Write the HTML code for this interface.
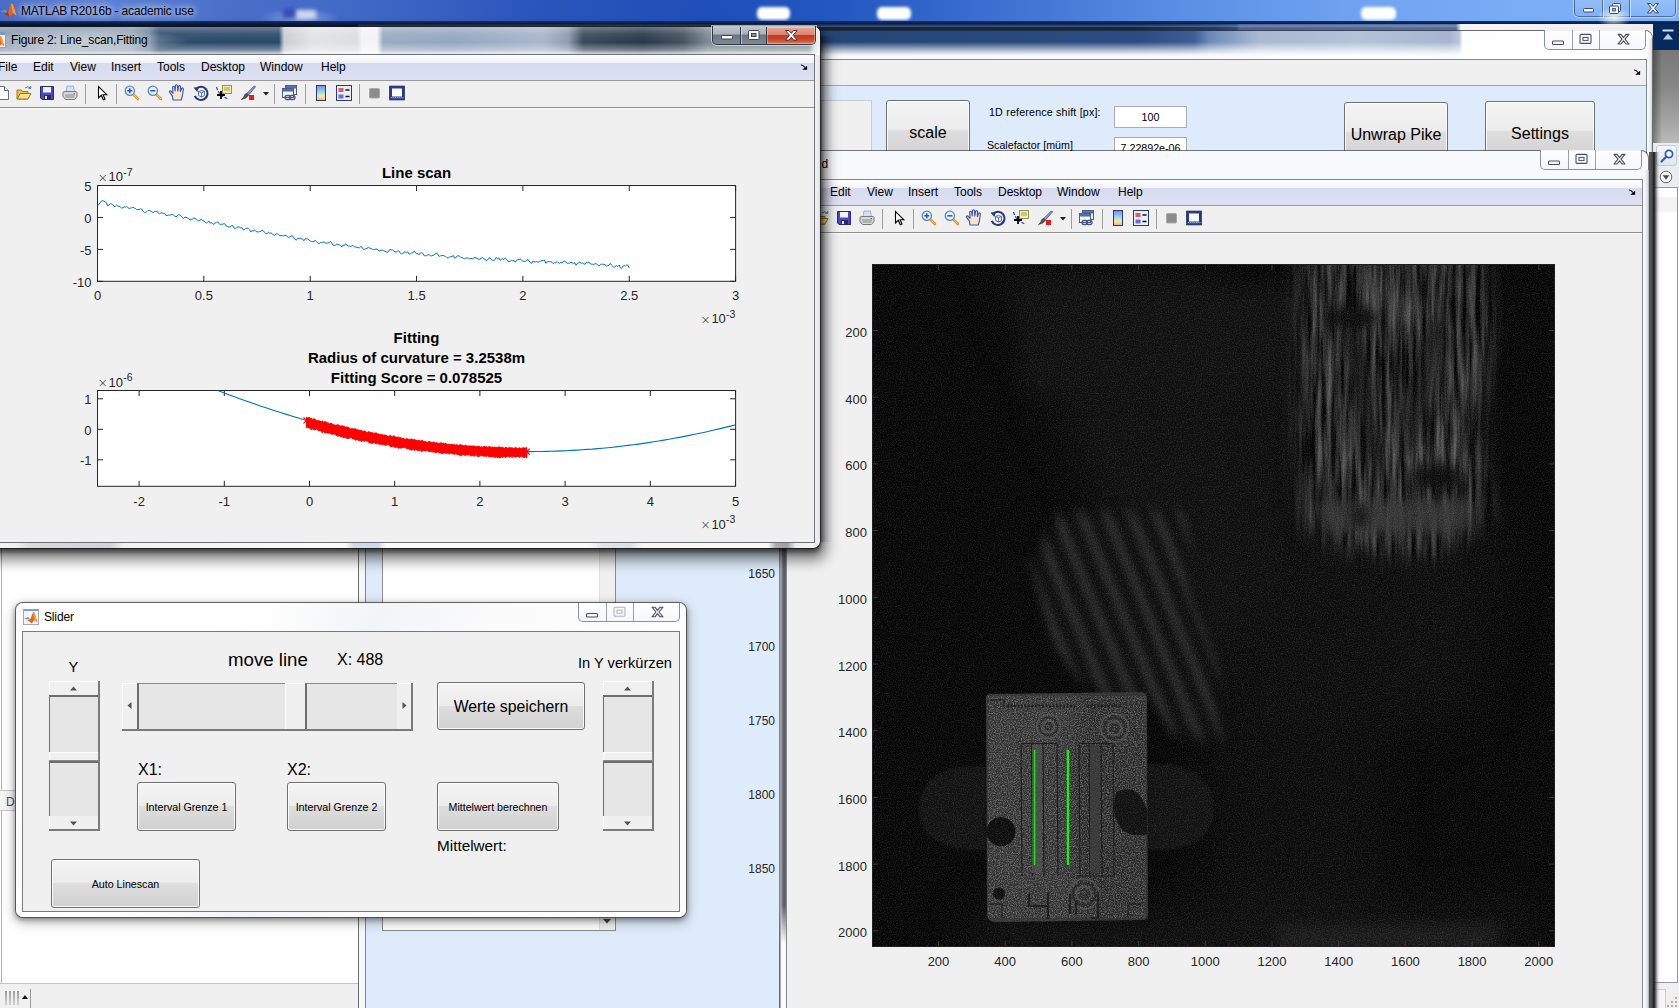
<!DOCTYPE html>
<html><head><meta charset="utf-8"><title>MATLAB R2016b - academic use</title>
<style>
html,body{margin:0;padding:0}
body{width:1679px;height:1008px;overflow:hidden;position:relative;background:#fff;font-family:"Liberation Sans",sans-serif;color:#000}
.a{position:absolute}
.ui{font-family:"Liberation Sans",sans-serif;font-size:12px;white-space:nowrap;color:#000}
.t{position:absolute;white-space:nowrap;line-height:1}
.btn{position:absolute;box-sizing:border-box;border:1px solid #707070;border-radius:3px;background:linear-gradient(#f4f4f4 0%,#ececec 49%,#dedede 50%,#d0d0d0 100%);box-shadow:inset 0 0 0 1px rgba(255,255,255,.85);text-align:center;white-space:nowrap}
.menu{position:absolute;background:linear-gradient(#ffffff 0%,#f1f3fa 32%,#d6dbef 34%,#dde1f2 100%)}
.menu span{position:absolute;top:5px;font-size:12px;white-space:nowrap;line-height:14px}
.tb{position:absolute;background:#f0f0f0}
.sep{position:absolute;width:1px;background:#a0a0a0;top:4px;height:20px}
.tick{position:absolute;font-size:12px;color:#262626;white-space:nowrap;line-height:12px}
.sl{position:absolute;background:#e6e6e6;box-sizing:border-box}
svg{position:absolute;overflow:visible}
</style></head><body>
<div id="mtitle" class="a" style="left:0;top:0;width:1679px;height:22px;background:
radial-gradient(ellipse 40px 10px at 300px 18px,rgba(200,215,245,.5),rgba(255,255,255,0) 100%),
linear-gradient(90deg,#4a6cc6 0%,#5c80d4 6%,#4a6fc9 14%,#3f68c6 22%,#2a55bb 32%,#1f4fb8 42%,#2457c0 50%,#3f72d2 60%,#5a8ee4 70%,#6ea2f0 80%,#78acf5 90%,#7eb2f8 100%)"></div>
<div class="a" style="left:757px;top:7px;width:33px;height:13px;border-radius:5px;background:#fff;filter:blur(1.600px)"></div><div class="a" style="left:877px;top:7px;width:34px;height:13px;border-radius:5px;background:#fff;filter:blur(1.600px)"></div><div class="a" style="left:1361px;top:7px;width:35px;height:13px;border-radius:5px;background:#fff;filter:blur(1.600px)"></div><div class="a" style="left:283px;top:9px;width:14px;height:9px;background:#2432a8;filter:blur(2px);opacity:.7"></div><div class="a" style="left:296px;top:10px;width:20px;height:9px;background:#e8ecf8;filter:blur(2px);opacity:.8"></div><div class="a" style="left:0;top:21px;width:1679px;height:6px;background:linear-gradient(#16326a,#0a1c40 50%,#08183a)"></div>
<svg style="left:0;top:2px" width="18" height="18" viewBox="0 0 18 18"><path d="M0 10 L5 7.5 L8 10.5 Z" fill="#4a9fd0"/><path d="M4 12 L8 10 L11 2 Q12.5 0.5 13.5 4 L16.5 13.5 L13 11 L9.5 15.5 L7 13 Z" fill="#e8622a"/><path d="M11 2 Q12.5 0.5 13.5 4 L16.5 13.5 L13 11 Z" fill="#f4a020"/><path d="M4 12 L8 10 L9.5 15.5 L7 13 Z" fill="#a03018"/></svg>
<div class="t ui" style="left:21px;top:5px;font-size:12px;letter-spacing:-0.16px;text-shadow:0 0 6px rgba(255,255,255,.9),0 0 10px rgba(255,255,255,.7)">MATLAB R2016b - academic use</div>
<div class="a" style="left:1574px;top:-1px;width:102px;height:18px;border:1px solid rgba(40,60,110,.65);border-radius:0 0 5px 5px;box-sizing:border-box;background:linear-gradient(rgba(255,255,255,.18),rgba(255,255,255,.05));box-shadow:0 0 0 1px rgba(255,255,255,.45),0 0 10px 2px rgba(255,255,240,.0)"></div>
<div class="a" style="left:1602px;top:0;width:1px;height:17px;background:rgba(40,60,110,.6)"></div><div class="a" style="left:1603px;top:0;width:1px;height:17px;background:rgba(255,255,255,.5)"></div>
<div class="a" style="left:1629px;top:0;width:1px;height:17px;background:rgba(40,60,110,.6)"></div><div class="a" style="left:1630px;top:0;width:1px;height:17px;background:rgba(255,255,255,.5)"></div>
<div class="a" style="left:1597px;top:2px;width:34px;height:22px;background:radial-gradient(ellipse 17px 11px at 50% 70%,rgba(255,255,235,.85),rgba(255,255,255,0) 100%)"></div>
<svg style="left:1574px;top:0" width="102" height="18" viewBox="0 0 102 18">
<rect x="9.5" y="8.5" width="10" height="3.5" rx="1" fill="#f4f4f4" stroke="#3c4a6c" stroke-width="1"/>
<rect x="38.5" y="3.5" width="8" height="8" rx="1" fill="#f0f0f0" stroke="#3c4a6c"/><rect x="35.500" y="6" width="9" height="7.500" rx="1" fill="#f4f4f4" stroke="#3c4a6c"/><rect x="38.500" y="8.500" width="3" height="2.5" fill="#8ab4f0" stroke="#3c4a6c" stroke-width=".8"/>
<path d="M73.500 3.500 l3.200 0 l2.300 3 l2.300 -3 l3.200 0 l-3.800 4.700 l3.800 4.700 l-3.200 0 l-2.300 -3 l-2.300 3 l-3.200 0 l3.800 -4.700 z" fill="#f2f2f2" stroke="#3c4a6c" stroke-width="1" stroke-linejoin="round"/>
</svg>
<div class="a" style="left:0;top:540px;width:358px;height:443px;background:#fff;border-left:1px solid #fff"></div>
<div class="a" style="left:1px;top:540px;width:1px;height:443px;background:#b4b4b4"></div>
<div class="a" style="left:0;top:790px;width:20px;height:21px;background:#f4f4f4;border-top:1px solid #c8c8c8;border-bottom:1px solid #c8c8c8;box-sizing:border-box"></div>
<div class="t ui" style="left:6px;top:796px;font-size:12px;color:#36507e">D</div>
<div class="a" style="left:0;top:983px;width:366px;height:25px;background:#f0f0f0;border-top:1px solid #c4c4c4;box-sizing:border-box"></div>
<div class="a" style="left:5px;top:991px;width:15px;height:14px;background:repeating-linear-gradient(90deg,#9a9a9a 0 2.5px,#f0f0f0 2.5px 4px);-webkit-mask-image:linear-gradient(#000,rgba(0,0,0,.35));mask-image:linear-gradient(#000,rgba(0,0,0,.35))"></div>
<svg style="left:22px;top:995px" width="6" height="4"><path d="M0 4 L3 0 L6 4Z" fill="#111"/></svg>
<div class="a" style="left:30px;top:989px;width:1px;height:19px;background:#9a9a9a"></div>
<div class="a" style="left:1653px;top:24px;width:26px;height:27px;background:#062a5e"></div>
<svg style="left:1662px;top:29px" width="12" height="12"><rect x="0.500" y="0.500" width="11" height="2" fill="#cfdbea"/><path d="M1 10.500 L6 4.500 L11 10.500 Z" fill="#b9cbdc"/></svg>
<div class="a" style="left:1653px;top:50px;width:26px;height:94px;background:linear-gradient(90deg,rgba(0,0,0,.35),rgba(0,0,0,0) 9px),linear-gradient(#787878,#888888 40%,#a4a4a4 75%,#bcbcbc 100%)"></div>
<div class="a" style="left:1653px;top:143px;width:26px;height:46px;background:#e9edf2"></div>
<div class="a" style="left:1656px;top:145px;width:21px;height:21px;border:1px solid #c2cad6;border-radius:3px;box-sizing:border-box;background:linear-gradient(#f4f7fb,#dfe6f0)"></div>
<svg style="left:1659px;top:148px" width="16" height="16" viewBox="0 0 16 16"><circle cx="10" cy="6" r="3.600" fill="#fff" stroke="#2a5fb0" stroke-width="1.800"/><path d="M7.200 8.800 L2.500 13.500" stroke="#2a5fb0" stroke-width="2.200" stroke-linecap="round"/></svg>
<svg style="left:1659px;top:170px" width="14" height="14" viewBox="0 0 14 14"><circle cx="7" cy="7" r="5.800" fill="#f6f6f6" stroke="#6a6a6a" stroke-width="1"/><path d="M3.800 5.200 L10.200 5.200 L7 9.800Z" fill="#444"/></svg>
<div class="a" style="left:1653px;top:187px;width:25px;height:796px;background:#fff;border:1px solid #8e97a6;border-left:none;box-sizing:border-box"></div>
<div class="a" style="left:1653px;top:197px;width:24px;height:15px;background:#f3f3f3"></div>
<div class="a" style="left:1653px;top:983px;width:26px;height:25px;background:#f0f0f0"></div>
<div class="a" style="left:1653px;top:989px;width:12px;height:19px;background:#f6f6f6;border-top:1px solid #cfcfcf;border-right:1px solid #cfcfcf"></div>
<svg style="left:1666px;top:996px" width="13" height="12"><g fill="#b4ac98"><rect x="9" y="1" width="2" height="2"/><rect x="5" y="5" width="2" height="2"/><rect x="9" y="5" width="2" height="2"/><rect x="1" y="9" width="2" height="2"/><rect x="5" y="9" width="2" height="2"/><rect x="9" y="9" width="2" height="2"/></g></svg>
<div class="a" style="left:358px;top:24px;width:1295px;height:8px;background:linear-gradient(90deg,#0c2146 0px,#0e2750 780px,#1f3d6e 860px,#2c4c80 878px,#4a6496 882px,#54709f 1098px,#f4f4f4 1103px,#ececec 1295px)"></div>
<div class="a" style="left:358px;top:24px;width:1295px;height:3px;background:linear-gradient(rgba(255,255,255,.0),rgba(255,255,255,.25))"></div>
<div id="gui" class="a" style="left:359px;top:31px;width:1293px;height:990px;border-radius:7px 7px 0 0;background:#f7f8fa;box-shadow:0 0 0 1px rgba(50,50,50,.7)"></div>
<div class="a" style="left:359px;top:31px;width:1293px;height:29px;border-radius:7px 7px 0 0;background:linear-gradient(90deg,#20406f 0px,#234677 460px,#2a4c80 780px,#3d5f95 835px,#6a88b8 850px,#8ea4c6 878px,#a9b9d2 900px,#b4c2d8 1000px,#a6b6d0 1090px,#b8c6da 1100px,#fdfdfe 1104px,#ffffff 1293px)"></div>
<div class="a" style="left:359px;top:42px;width:1293px;height:18px;background:linear-gradient(rgba(255,255,255,0),rgba(255,255,255,.55) 40%,rgba(255,255,255,.95) 72%,#fff)"></div>
<div class="a" style="left:1647px;top:38px;width:5px;height:980px;background:linear-gradient(90deg,#fdfdfe,#e6ebf2 70%,#c8ced6)"></div>
<div class="a" style="left:365px;top:59px;width:1282px;height:960px;background:#deebfa;border:1px solid #7d8791;box-sizing:border-box"></div>
<div class="a" style="left:366px;top:60px;width:1280px;height:25px;background:#f0f0f0"></div>
<div class="a" style="left:366px;top:85px;width:1280px;height:1px;background:#a5a5a5"></div>
<svg style="left:1633px;top:69px" width="8" height="6.500" viewBox="0 0 9 9" preserveAspectRatio="none"><path d="M1 1.500 Q3.500 1.200 5.500 4.800" fill="none" stroke="#000" stroke-width="1.300"/><path d="M8 2.500 L8 8 L2.500 8 Z" fill="#000"/></svg>
<div class="a" style="left:1544px;top:30px;width:102px;height:20px;border:1px solid #8a90a0;border-top:none;border-radius:0 0 5px 5px;box-sizing:border-box;background:linear-gradient(rgba(255,255,255,.9),rgba(244,246,250,.9))"></div><div class="a" style="left:1572px;top:30px;width:1px;height:19px;background:#9aa0ae"></div><div class="a" style="left:1599px;top:30px;width:1px;height:19px;background:#9aa0ae"></div><svg style="left:1544px;top:30px" width="102" height="20"><rect x="8.5" y="11.0" width="11" height="3.500" rx="1" fill="#f6f6f6" stroke="#4a5068" stroke-width="1.100"/><rect x="36.0" y="4.4" width="11" height="9" rx="1" fill="#f6f6f6" stroke="#4a5068" stroke-width="1.100"/><rect x="39.0" y="7.4" width="5" height="3" fill="#fff" stroke="#4a5068" stroke-width="1"/><path d="M74.0 4.4 l3 0 l2.500 3.200 l2.500 -3.200 l3 0 l-4 4.800 l4 4.800 l-3 0 l-2.500 -3.200 l-2.500 3.200 l-3 0 l4 -4.800 z" fill="#f4f4f4" stroke="#4a5068" stroke-width="1.100" stroke-linejoin="round"/></svg><div class="a" style="left:821px;top:100px;width:51px;height:60px;background:#f0f0f0;border:1px solid #c9cdd3;box-sizing:border-box"></div>
<div class="btn" style="left:886px;top:100px;width:84px;height:60px;font-size:16px;line-height:64px">scale</div>
<div class="t" style="left:989px;top:106px;font-size:10.670px;letter-spacing:.19px;line-height:12px">1D reference shift [px]:</div>
<div class="t" style="left:987px;top:139px;font-size:10.670px;line-height:12px">Scalefactor [müm]</div>
<div class="a" style="left:1114px;top:106px;width:73px;height:22px;background:#fff;border:1px solid #abadb3;box-sizing:border-box;text-align:center;font-size:10.670px;line-height:21px">100</div>
<div class="a" style="left:1114px;top:137px;width:73px;height:22px;background:#fff;border:1px solid #abadb3;box-sizing:border-box;text-align:center;font-size:10.670px;line-height:21px">7.22892e-06</div>
<div class="btn" style="left:1344px;top:102px;width:104px;height:60px;font-size:16px;line-height:64px">Unwrap Pike</div>
<div class="btn" style="left:1485px;top:101px;width:110px;height:60px;font-size:16px;line-height:63px">Settings</div>
<div class="a" style="left:382px;top:540px;width:234px;height:391px;background:#fff;border:1px solid #8c8c8c;box-sizing:border-box"></div>
<div class="a" style="left:599px;top:541px;width:16px;height:389px;background:#f0f0f0;border-left:1px solid #e2e2e2;box-sizing:border-box"></div>
<svg style="left:603px;top:919px" width="9" height="5"><path d="M0 0 L8 0 L4 4.500Z" fill="#444"/></svg>
<div class="tick" style="left:747px;top:567.5px;width:28px;text-align:right;font-size:12px">1650</div><div class="tick" style="left:747px;top:641.3px;width:28px;text-align:right;font-size:12px">1700</div><div class="tick" style="left:747px;top:715.0px;width:28px;text-align:right;font-size:12px">1750</div><div class="tick" style="left:747px;top:788.8px;width:28px;text-align:right;font-size:12px">1800</div><div class="tick" style="left:747px;top:862.5px;width:28px;text-align:right;font-size:12px">1850</div><div class="a" style="left:1649px;top:152px;width:11px;height:860px;background:linear-gradient(90deg,#5a5a5a 0,#4a4a4a 30%,#141414 45%,rgba(40,40,40,.55) 65%,rgba(120,120,120,.2) 82%,rgba(255,255,255,0) 100%)"></div>
<div id="imgfig" class="a" style="left:781px;top:151px;width:867px;height:870px;border-radius:7px 7px 0 0;background:#f7f9fc;box-shadow:0 0 0 1px rgba(40,40,40,.6)"></div>
<div class="a" style="left:779px;top:180px;width:9px;height:830px;background:linear-gradient(90deg,rgba(90,94,100,.5) 0,#6a6e74 1px,#c8cace 2px,#84888e 30%,#55595f 55%,#6a6e74 80%,#c0c2c6 92%,#70747a 100%)"></div>
<div class="a" style="left:779px;top:905px;width:9px;height:110px;background:linear-gradient(90deg,rgba(90,94,100,.5) 0,#5f6369 1px,#f4f6f9 2px,#ffffff 50%,#eef1f5 86%,#7a7e84 100%);-webkit-mask-image:linear-gradient(rgba(0,0,0,0) 0,#000 38px);mask-image:linear-gradient(rgba(0,0,0,0) 0,#000 38px)"></div>
<div class="a" style="left:1643px;top:170px;width:6px;height:840px;background:linear-gradient(90deg,#ffffff,#e9eef6 50%,#cfd8e6 85%,#8a8e96)"></div>
<div class="t ui" style="left:821.5px;top:158px;font-size:12px">d</div>
<div class="a" style="left:1540px;top:150px;width:102px;height:20px;border:1px solid #8a90a0;border-top:none;border-radius:0 0 5px 5px;box-sizing:border-box;background:linear-gradient(rgba(255,255,255,.9),rgba(244,246,250,.9))"></div><div class="a" style="left:1568px;top:150px;width:1px;height:19px;background:#9aa0ae"></div><div class="a" style="left:1595px;top:150px;width:1px;height:19px;background:#9aa0ae"></div><svg style="left:1540px;top:150px" width="102" height="20"><rect x="8.5" y="11.0" width="11" height="3.500" rx="1" fill="#f6f6f6" stroke="#4a5068" stroke-width="1.100"/><rect x="36.0" y="4.4" width="11" height="9" rx="1" fill="#f6f6f6" stroke="#4a5068" stroke-width="1.100"/><rect x="39.0" y="7.4" width="5" height="3" fill="#fff" stroke="#4a5068" stroke-width="1"/><path d="M74.0 4.4 l3 0 l2.500 3.200 l2.500 -3.200 l3 0 l-4 4.800 l4 4.800 l-3 0 l-2.500 -3.200 l-2.500 3.200 l-3 0 l4 -4.800 z" fill="#f4f4f4" stroke="#4a5068" stroke-width="1.100" stroke-linejoin="round"/></svg><div class="a" style="left:786px;top:179px;width:857px;height:840px;background:#f0f0f0;border:1px solid #84888e;box-sizing:border-box"></div><div class="menu" style="left:787px;top:180px;width:855px;height:25px"><span style="left:8px">File</span><span style="left:43px">Edit</span><span style="left:80px">View</span><span style="left:121px">Insert</span><span style="left:167px">Tools</span><span style="left:211px">Desktop</span><span style="left:270px">Window</span><span style="left:331px">Help</span></div><svg style="left:1628px;top:189px" width="8" height="6.500" viewBox="0 0 9 9" preserveAspectRatio="none"><path d="M1 1.500 Q3.500 1.200 5.500 4.800" fill="none" stroke="#000" stroke-width="1.300"/><path d="M8 2.500 L8 8 L2.500 8 Z" fill="#000"/></svg><div class="a" style="left:787px;top:205px;width:855px;height:1px;background:#9a9a9a"></div><div class="a" style="left:787px;top:232px;width:855px;height:1px;background:#8e8e8e"></div><div class="a" style="left:787px;top:233px;width:855px;height:1px;background:#fcfcfc"></div><svg style="left:792px;top:210px" width="16" height="16" viewBox="0 0 16 16"><path d="M2.500 1.500 L9.500 1.500 L13.500 5.500 L13.500 14.500 L2.500 14.500 Z" fill="#fdfdff" stroke="#62708c"/><path d="M9.500 1.500 L9.500 5.500 L13.500 5.500" fill="#dfe5f2" stroke="#62708c"/></svg><svg style="left:813px;top:210px" width="16" height="16" viewBox="0 0 16 16"><path d="M9 3 Q12 0.500 14.500 3 M14.800 1 L14.800 3.400 L12.400 3.400" fill="none" stroke="#5a78b0" stroke-width="1"/><path d="M1 5 L1 14 L12 14 L12 6.500 L6.500 6.500 L5.500 5 Z" fill="#e9c24a" stroke="#9a7a1c"/><path d="M1.500 14 L4 8.500 L15 8.500 L12 14 Z" fill="#f7e088" stroke="#9a7a1c"/></svg><svg style="left:836px;top:210px" width="16" height="16" viewBox="0 0 16 16"><path d="M1.500 1.500 L14.500 1.500 L14.500 14.500 L3 14.500 L1.500 13 Z" fill="#4a48c4" stroke="#2a2878"/><rect x="4" y="2" width="8" height="5.500" fill="#f2f2fa"/><rect x="5" y="10" width="7" height="4.500" fill="#2a2a60"/><rect x="6" y="11" width="2" height="3" fill="#e8e8f0"/></svg><svg style="left:859px;top:210px" width="16" height="16" viewBox="0 0 16 16"><path d="M5 1 L11.500 1 L12.500 7 L4 7 Z" fill="#cfe2fb" stroke="#8ea4c4" stroke-width=".8"/><path d="M1 7.500 Q1 6.500 3 6.500 L13 6.500 Q15 6.500 15 7.500 L15 11.500 L12.500 14.500 L3.500 14.500 L1 11.500 Z" fill="#d8d8d8" stroke="#7a7a7a"/><path d="M3 10 L13 10 M3.500 12 L12.500 12" stroke="#8a8a8a" stroke-width="1"/><rect x="11.500" y="8" width="1.500" height="1" fill="#3a9a3a"/></svg><div class="a" style="left:882px;top:209px;width:1px;height:20px;background:#9d9d9d"></div><svg style="left:891px;top:210px" width="16" height="16" viewBox="0 0 16 16"><path d="M4.500 1.500 L4.500 13 L7.300 10.300 L9.300 14.800 L11 14 L9 9.700 L12.800 9.700 Z" fill="#fff" stroke="#000" stroke-width="1.100" stroke-linejoin="miter"/></svg><div class="a" style="left:913px;top:209px;width:1px;height:20px;background:#9d9d9d"></div><svg style="left:921px;top:210px" width="16" height="16" viewBox="0 0 16 16"><path d="M8.800 8.800 L14 14" stroke="#d89430" stroke-width="2.600" stroke-linecap="round"/><path d="M8.800 8.800 L14 14" stroke="#f2c46a" stroke-width="1" stroke-linecap="round"/><circle cx="5.800" cy="5.800" r="4.600" fill="#e6f1ff" stroke="#5a84c8" stroke-width="1.300"/><path d="M3.300 5.800 L8.300 5.800 M5.800 3.300 L5.800 8.300" stroke="#2c56b0" stroke-width="1.500"/></svg><svg style="left:944px;top:210px" width="16" height="16" viewBox="0 0 16 16"><path d="M8.800 8.800 L14 14" stroke="#d89430" stroke-width="2.600" stroke-linecap="round"/><path d="M8.800 8.800 L14 14" stroke="#f2c46a" stroke-width="1" stroke-linecap="round"/><circle cx="5.800" cy="5.800" r="4.600" fill="#e6f1ff" stroke="#5a84c8" stroke-width="1.300"/><path d="M3.300 5.800 L8.300 5.800" stroke="#2c56b0" stroke-width="1.500"/></svg><svg style="left:966px;top:210px" width="16" height="16" viewBox="0 0 16 16"><g transform="translate(-1.300,-1.800) scale(1.180,1.120)"><path d="M4.500 15 L4 11.500 L1.500 8 Q1.200 6.500 2.800 7 L4.500 9 L4.200 3.500 Q4.800 2 5.800 3.300 L6.300 7 L6.600 2 Q7.500 0.700 8.300 2 L8.500 7 L9.300 2.700 Q10.300 1.500 10.900 3 L10.700 7.500 L11.900 4.500 Q13 3.700 13.300 5 L12.500 11 L11.500 15 Z" fill="#fbe3cf" stroke="#3c5cb0" stroke-width="1" stroke-linejoin="round"/></g></svg><svg style="left:990px;top:210px" width="16" height="16" viewBox="0 0 16 16"><path d="M3 4 A6.600 6.600 0 1 1 1.800 10.800" fill="none" stroke="#24387c" stroke-width="2.100"/><path d="M0.500 2.500 L5.800 2.200 L4.300 7 Z" fill="#24387c"/><path d="M5.500 6.500 L8.500 5.500 L11.500 6.500 L11.500 10.500 L8.500 12 L5.500 10.500 Z M5.500 6.500 L8.500 7.800 L11.500 6.500 M8.500 7.800 L8.500 12" fill="#eef2fb" stroke="#4a64a8" stroke-width=".9"/></svg><svg style="left:1013px;top:210px" width="16" height="16" viewBox="0 0 16 16"><path d="M0.500 2 Q3 11.500 13 14" fill="none" stroke="#2030e0" stroke-width="1.100" stroke-dasharray="3 1.500"/><rect x="6.500" y="0.500" width="9" height="8" fill="#f6eda0" stroke="#8a8a4a" stroke-width=".9"/><path d="M8 3 L14 3 M8 5 L14 5" stroke="#8a8a5a" stroke-width=".8"/><path d="M1 10 L9 10 M5 6 L5 14" stroke="#000" stroke-width="1.800"/></svg><svg style="left:1037px;top:210px" width="16" height="16" viewBox="0 0 16 16"><path d="M14.500 0.800 L15.500 1.800 L8.500 10 L6.800 8.500 Z" fill="#8aa0d8" stroke="#3a4a88" stroke-width=".8"/><path d="M6.800 8.500 L8.500 10 Q7 13.500 1.500 14.500 Q4.500 12 4.500 10 Q5.500 8.200 6.800 8.500Z" fill="#555" stroke="#333" stroke-width=".6"/><rect x="9" y="10" width="5" height="5" fill="#f01818"/></svg><svg style="left:1060px;top:217px" width="7" height="4"><path d="M0 0 L6 0 L3 3.500Z" fill="#222"/></svg><div class="a" style="left:1071px;top:209px;width:1px;height:20px;background:#9d9d9d"></div><svg style="left:1079px;top:210px" width="16" height="16" viewBox="0 0 16 16"><rect x="3.500" y="0.500" width="11" height="9" fill="#eaf0fa" stroke="#4a5c8c"/><rect x="3.500" y="0.500" width="11" height="2.500" fill="#5a74b4" stroke="#4a5c8c"/><rect x="0.500" y="3.500" width="11" height="9" fill="#f4f7fc" stroke="#4a5c8c"/><rect x="0.500" y="3.500" width="11" height="2.500" fill="#5a74b4" stroke="#4a5c8c"/><rect x="3" y="10.500" width="5.500" height="4" rx="2" fill="none" stroke="#4a5878" stroke-width="1.300"/><rect x="7.500" y="10.500" width="5.500" height="4" rx="2" fill="none" stroke="#4a5878" stroke-width="1.300"/></svg><div class="a" style="left:1102px;top:209px;width:1px;height:20px;background:#9d9d9d"></div><svg style="left:1110px;top:210px" width="16" height="16" viewBox="0 0 16 16"><defs><linearGradient id="cbg2787" x1="0" y1="0" x2="0" y2="1"><stop offset="0" stop-color="#8486ea"/><stop offset=".4" stop-color="#8cd4ea"/><stop offset=".7" stop-color="#f2eea4"/><stop offset="1" stop-color="#f2aa9c"/></linearGradient></defs><rect x="3.500" y="0.500" width="9" height="15" fill="url(#cbg2787)" stroke="#2a3a78"/></svg><svg style="left:1133px;top:210px" width="16" height="16" viewBox="0 0 16 16"><rect x="0.500" y="0.500" width="15" height="15" fill="#e9eef8" stroke="#2a3a78"/><rect x="2.500" y="3" width="5" height="4" fill="#e05c6c"/><rect x="2.500" y="9.500" width="5" height="4" fill="#6c6ce0"/><path d="M9.500 5 L13.500 5 M9.500 11.500 L13.500 11.500" stroke="#111" stroke-width="1.300"/></svg><div class="a" style="left:1156px;top:209px;width:1px;height:20px;background:#9d9d9d"></div><svg style="left:1164px;top:210px" width="16" height="16" viewBox="0 0 16 16"><rect x="2.500" y="3.500" width="10" height="9.500" rx="1" fill="#8c8c8c" stroke="#a8a8a8"/></svg><svg style="left:1186px;top:210px" width="16" height="16" viewBox="0 0 16 16"><rect x="0.700" y="1.200" width="14.600" height="13.600" fill="#2c3c8c" stroke="#1c2c6c" stroke-width="1"/><rect x="3" y="3.500" width="10" height="8" fill="#fff"/><path d="M1.500 13.200 l1 -1 l1 1 l1 -1 l1 1 l1 -1 l1 1 l1 -1 l1 1 l1 -1 l1 1 l1 -1 l1 1 l1 -1" stroke="#c8d0f0" stroke-width=".7" fill="none"/></svg><svg style="left:872px;top:264px" width="683" height="683" viewBox="0 0 683 683"><defs>
<filter id="nz" x="0" y="0" width="100%" height="100%" color-interpolation-filters="sRGB"><feTurbulence type="fractalNoise" baseFrequency="0.850" numOctaves="2" seed="5" result="t"/><feColorMatrix type="matrix" values="0 0 0 0 1  0 0 0 0 1  0 0 0 0 1  1.600 0 0 0 -0.620"/></filter>
<filter id="nz2" x="0" y="0" width="100%" height="100%" color-interpolation-filters="sRGB"><feTurbulence type="fractalNoise" baseFrequency="0.900" numOctaves="1" seed="11"/><feColorMatrix type="matrix" values="0 0 0 0 0  0 0 0 0 0  0 0 0 0 0  0 1.800 0 0 -0.700"/></filter>
<filter id="strk" x="0" y="0" width="100%" height="100%" color-interpolation-filters="sRGB"><feTurbulence type="fractalNoise" baseFrequency="0.200 0.014" numOctaves="3" seed="8"/><feColorMatrix type="matrix" values="0.600 0 0 0 -0.150  0.600 0 0 0 -0.150  0.600 0 0 0 -0.150  0 0 0 0 1"/></filter>
<filter id="b3" filterUnits="userSpaceOnUse" x="-150" y="-150" width="983" height="983" color-interpolation-filters="sRGB"><feGaussianBlur stdDeviation="3"/></filter>
<filter id="b6" filterUnits="userSpaceOnUse" x="-150" y="-150" width="983" height="983" color-interpolation-filters="sRGB"><feGaussianBlur stdDeviation="6"/></filter>
<filter id="b10" filterUnits="userSpaceOnUse" x="-150" y="-150" width="983" height="983" color-interpolation-filters="sRGB"><feGaussianBlur stdDeviation="10"/></filter>
<filter id="b1" filterUnits="userSpaceOnUse" x="-150" y="-150" width="983" height="983" color-interpolation-filters="sRGB"><feGaussianBlur stdDeviation="0.800"/></filter>
<filter id="b20" filterUnits="userSpaceOnUse" x="-150" y="-150" width="983" height="983" color-interpolation-filters="sRGB"><feGaussianBlur stdDeviation="22"/></filter>
<clipPath id="cp"><rect x="0" y="0" width="683" height="683"/></clipPath>
<mask id="blobm"><g filter="url(#b10)"><path d="M428 -20 L612 -20 L622 60 L612 150 L618 250 L596 272 L560 292 L470 288 L432 262 L424 170 L428 80 Z" fill="#fff"/></g></mask>
<mask id="strm"><g filter="url(#b6)"><path d="M186 248 L316 246 L318 330 L345 400 L350 480 L300 470 L276 440 L232 440 L176 382 L160 300 Z" fill="#fff"/></g></mask>
<pattern id="vs" width="23" height="10" patternUnits="userSpaceOnUse"><rect width="23" height="10" fill="#242424"/><rect x="2" width="2.500" height="10" fill="#404040"/><rect x="7" width="3" height="10" fill="#151515"/><rect x="12.500" width="2" height="10" fill="#3d3d3d"/><rect x="17" width="2.500" height="10" fill="#1a1a1a"/><rect x="20.500" width="1.500" height="10" fill="#404040"/></pattern>
<pattern id="ds" width="23.100" height="10" patternUnits="userSpaceOnUse" patternTransform="rotate(-22.500)"><rect width="23.100" height="10" fill="#0b0b0b"/><rect x="0" width="10.500" height="10" fill="#232323"/></pattern>
</defs><g clip-path="url(#cp)"><rect width="683" height="683" fill="#040404"/><g filter="url(#b20)" opacity=".9"><path d="M120 0 L330 0 L480 420 L300 430 Z" fill="#0f0f0f"/><path d="M330 100 L440 90 L430 600 L360 420 Z" fill="#0d0d0d"/><rect x="340" y="370" width="170" height="290" fill="#0b0b0b"/><rect x="100" y="640" width="560" height="80" fill="#0e0e0e"/><path d="M420 250 L640 250 L600 460 L380 460Z" fill="#0c0c0c"/></g><rect x="405" y="660" width="220" height="30" fill="#181818" filter="url(#b6)"/><rect x="150" y="20" width="300" height="110" fill="#0e0e0e" filter="url(#b10)"/><g mask="url(#strm)"><rect x="120" y="200" width="280" height="320" fill="url(#ds)" filter="url(#b3)"/></g><g mask="url(#blobm)"><rect x="400" y="-10" width="240" height="320" fill="#000" filter="url(#strk)"/><g filter="url(#b6)"><ellipse cx="481" cy="54" rx="26" ry="12" fill="#0c0c0c"/><ellipse cx="566" cy="213" rx="24" ry="13" fill="#0c0c0c"/><path d="M444 236 L600 236 L596 268 L450 270Z" fill="#3a3a3a" opacity=".8"/><path d="M470 70 L500 200 L510 200 L486 70Z" fill="#151515"/><path d="M560 60 L530 190 L540 190 L574 60Z" fill="#171717"/><ellipse cx="488" cy="252" rx="8" ry="14" fill="#101010"/></g><rect x="400" y="-10" width="240" height="320" fill="#fff" filter="url(#nz2)" opacity=".22"/></g><g filter="url(#b1)"><path d="M114 502 L92 502 Q47 508 47 544 Q47 580 92 586 L114 586 Z" fill="#101010"/><path d="M275 500 L298 500 Q342 508 342 544 Q342 580 298 586 L275 586 Z" fill="#101010"/></g><path d="M114 433 Q114 430 118 430 L270 428 Q275 429 275 434 L276 650 Q276 656 270 656 L122 658 Q115 657 115 650 Z" fill="#343434"/><rect x="205" y="432" width="70" height="222" fill="#000" opacity=".18" filter="url(#b6)"/><rect x="116" y="432" width="158" height="222" fill="#fff" filter="url(#nz2)" opacity=".30"/><rect x="116" y="432" width="158" height="222" fill="#000" filter="url(#nz)" opacity=".35"/><path d="M149.0 480 L150.0 612" stroke="#161616" stroke-width="1.100"/><path d="M159.5 480 L160.5 612" stroke="#161616" stroke-width="1.100"/><path d="M171.0 480 L172.0 612" stroke="#161616" stroke-width="1.100"/><path d="M185.0 480 L186.0 612" stroke="#161616" stroke-width="1.100"/><path d="M207.0 480 L208.0 612" stroke="#161616" stroke-width="1.100"/><path d="M217.0 480 L218.0 612" stroke="#161616" stroke-width="1.100"/><path d="M229.0 480 L230.0 612" stroke="#161616" stroke-width="1.100"/><path d="M241.0 480 L242.0 612" stroke="#161616" stroke-width="1.100"/><path d="M149 479.500 L185 479.500 M207 479.500 L241 479.500 M207 612 L241 612" stroke="#181818" stroke-width="1.200"/><rect x="160" y="481" width="10" height="128" fill="#484848"/><rect x="218" y="481" width="10" height="128" fill="#363636"/><circle cx="176.5" cy="462.5" r="3.0" fill="none" stroke="#262626" stroke-width="1.300"/><circle cx="176.5" cy="462.5" r="6.0" fill="none" stroke="#505050" stroke-width="1.300"/><circle cx="176.5" cy="462.5" r="9.0" fill="none" stroke="#262626" stroke-width="1.300"/><circle cx="176.5" cy="462.5" r="12.0" fill="none" stroke="#505050" stroke-width="1.300"/><circle cx="242.6" cy="464.0" r="3.5" fill="none" stroke="#262626" stroke-width="1.300"/><circle cx="242.6" cy="464.0" r="7.0" fill="none" stroke="#505050" stroke-width="1.300"/><circle cx="242.6" cy="464.0" r="10.5" fill="none" stroke="#262626" stroke-width="1.300"/><circle cx="242.6" cy="464.0" r="14.0" fill="none" stroke="#505050" stroke-width="1.300"/><circle cx="212.0" cy="630.0" r="3.8" fill="none" stroke="#262626" stroke-width="1.300"/><circle cx="212.0" cy="630.0" r="7.5" fill="none" stroke="#505050" stroke-width="1.300"/><circle cx="212.0" cy="630.0" r="11.2" fill="none" stroke="#262626" stroke-width="1.300"/><circle cx="212.0" cy="630.0" r="15.0" fill="none" stroke="#505050" stroke-width="1.300"/><circle cx="129" cy="567.700" r="14.500" fill="#0b0b0b"/><circle cx="127" cy="629.700" r="6" fill="#0e0e0e"/><path d="M244 528 Q262 520 270 535 L275 545 L275 570 Q262 574 250 566 Q238 550 244 528Z" fill="#0f0f0f"/><path d="M135 442 L205 442 M215 442 L250 442" stroke="#1c1c1c" stroke-width="3" stroke-dasharray="2 1.500"/><path d="M157 630 L157 642 L176 642 M176 628 L176 655 M198 630 L198 650 M204 636 L204 650 M226 628 L226 654 L219 654" stroke="#1a1a1a" stroke-width="2.200" fill="none"/><path d="M118 436 L132 436 L132 444 M118 640 L130 640 L130 654 M256 654 L256 640 L270 640" stroke="#202020" stroke-width="1.500" fill="none"/><rect x="161.800" y="486" width="1.500" height="115" fill="#00f000"/><rect x="194.800" y="486" width="2.200" height="115" fill="#00f800"/><rect width="683" height="683" fill="#fff" filter="url(#nz)" opacity=".17"/><path d="M0 66.5 L6 66.5 M683 66.5 L677 66.5 M66.5 683 L66.5 677 M66.5 0 L66.5 6" stroke="#3a3a3a" stroke-width="1"/><path d="M0 133.2 L6 133.2 M683 133.2 L677 133.2 M133.2 683 L133.2 677 M133.2 0 L133.2 6" stroke="#3a3a3a" stroke-width="1"/><path d="M0 199.9 L6 199.9 M683 199.9 L677 199.9 M199.9 683 L199.9 677 M199.9 0 L199.9 6" stroke="#3a3a3a" stroke-width="1"/><path d="M0 266.6 L6 266.6 M683 266.6 L677 266.6 M266.6 683 L266.6 677 M266.6 0 L266.6 6" stroke="#3a3a3a" stroke-width="1"/><path d="M0 333.3 L6 333.3 M683 333.3 L677 333.3 M333.3 683 L333.3 677 M333.3 0 L333.3 6" stroke="#3a3a3a" stroke-width="1"/><path d="M0 400.0 L6 400.0 M683 400.0 L677 400.0 M400.0 683 L400.0 677 M400.0 0 L400.0 6" stroke="#3a3a3a" stroke-width="1"/><path d="M0 466.7 L6 466.7 M683 466.7 L677 466.7 M466.7 683 L466.7 677 M466.7 0 L466.7 6" stroke="#3a3a3a" stroke-width="1"/><path d="M0 533.4 L6 533.4 M683 533.4 L677 533.4 M533.4 683 L533.4 677 M533.4 0 L533.4 6" stroke="#3a3a3a" stroke-width="1"/><path d="M0 600.1 L6 600.1 M683 600.1 L677 600.1 M600.1 683 L600.1 677 M600.1 0 L600.1 6" stroke="#3a3a3a" stroke-width="1"/><path d="M0 666.8 L6 666.8 M683 666.8 L677 666.8 M666.8 683 L666.8 677 M666.8 0 L666.8 6" stroke="#3a3a3a" stroke-width="1"/><rect x="0.500" y="0.500" width="682" height="682" fill="none" stroke="#202020" stroke-width="1"/></g></svg><div class="tick" style="left:826px;top:327.0px;width:41px;text-align:right;font-size:13px">200</div><div class="tick" style="left:908.5px;top:956px;width:60px;text-align:center;font-size:13px">200</div><div class="tick" style="left:826px;top:393.7px;width:41px;text-align:right;font-size:13px">400</div><div class="tick" style="left:975.2px;top:956px;width:60px;text-align:center;font-size:13px">400</div><div class="tick" style="left:826px;top:460.4px;width:41px;text-align:right;font-size:13px">600</div><div class="tick" style="left:1041.9px;top:956px;width:60px;text-align:center;font-size:13px">600</div><div class="tick" style="left:826px;top:527.1px;width:41px;text-align:right;font-size:13px">800</div><div class="tick" style="left:1108.6px;top:956px;width:60px;text-align:center;font-size:13px">800</div><div class="tick" style="left:826px;top:593.8px;width:41px;text-align:right;font-size:13px">1000</div><div class="tick" style="left:1175.3px;top:956px;width:60px;text-align:center;font-size:13px">1000</div><div class="tick" style="left:826px;top:660.5px;width:41px;text-align:right;font-size:13px">1200</div><div class="tick" style="left:1242.0px;top:956px;width:60px;text-align:center;font-size:13px">1200</div><div class="tick" style="left:826px;top:727.2px;width:41px;text-align:right;font-size:13px">1400</div><div class="tick" style="left:1308.7px;top:956px;width:60px;text-align:center;font-size:13px">1400</div><div class="tick" style="left:826px;top:793.9px;width:41px;text-align:right;font-size:13px">1600</div><div class="tick" style="left:1375.4px;top:956px;width:60px;text-align:center;font-size:13px">1600</div><div class="tick" style="left:826px;top:860.6px;width:41px;text-align:right;font-size:13px">1800</div><div class="tick" style="left:1442.1px;top:956px;width:60px;text-align:center;font-size:13px">1800</div><div class="tick" style="left:826px;top:927.3px;width:41px;text-align:right;font-size:13px">2000</div><div class="tick" style="left:1508.8px;top:956px;width:60px;text-align:center;font-size:13px">2000</div><div class="a" style="left:821px;top:36px;width:12px;height:506px;background:linear-gradient(90deg,rgba(0,0,0,.26),rgba(0,0,0,.12) 35%,rgba(0,0,0,.04) 70%,rgba(0,0,0,0))"></div><div id="fig2" class="a" style="left:-17px;top:27px;width:837px;height:521px;border-radius:7px;background:#ebecee;box-shadow:0 0 0 1px rgba(20,20,20,.7),0 3px 5px 1px rgba(0,0,0,.55),2px 8px 14px 4px rgba(0,0,0,.5)"></div>
<div class="a" style="left:-17px;top:27px;width:837px;height:28px;border-radius:6px 6px 0 0;background:linear-gradient(90deg,#8292a8 0px,#8797ac 150px,#6a7f98 166px,#2c4a6a 176px,#2a486a 296px,#c9cdd2 301px,#e2e3e5 330px,#dcdddf 374px,#f4f4f4 379px,#f4f4f4 394px,#9aabc2 400px,#93a6c0 470px,#a9b7cb 560px,#8d9cb0 585px,#3a4a5b 600px,#28384a 660px,#44525f 700px,#7d8994 725px,#8a949e 826px,#e2e6ea 832px,#eef0f2 837px)"></div>
<div class="a" style="left:-17px;top:27px;width:837px;height:28px;border-radius:6px 6px 0 0;background:linear-gradient(rgba(255,255,255,.30) 0,rgba(255,255,255,.08) 25%,rgba(255,255,255,0) 55%,rgba(255,255,255,.35) 82%,rgba(255,255,255,.9) 100%)"></div>
<div class="a" style="left:0px;top:29px;width:200px;height:24px;background:radial-gradient(ellipse 110px 13px at 80px 12px,rgba(255,255,255,.55),rgba(255,255,255,.3) 60%,rgba(255,255,255,0) 100%)"></div>
<div class="a" style="left:-11px;top:54px;width:826px;height:489px;background:#f0f0f0;border:1px solid #6e7278;box-sizing:border-box"></div>
<div class="a" style="left:815px;top:56px;width:5px;height:482px;background:linear-gradient(90deg,#f6f6f7,#e9eaec 60%,#dcdde0)"></div>
<div class="a" style="left:-10px;top:543px;width:824px;height:5px;background:linear-gradient(90deg,#f4f4f5 0px,#f0f0f2 25px,#d9dadc 40px,#d2d3d6 120px,#f2f2f3 135px,#fafafa 355px,#d3dbe6 364px,#d0d9e5 388px,#fafafa 396px,#fafafa 600px,#e2e4e7 612px,#dcdfe3 640px,#f6f6f7 652px,#f8f8f8 778px,#a8abb0 786px,#9da0a5 797px,#eeeff0 806px,#f4f4f5 824px)"></div>
<div class="a" style="left:-10px;top:32px;width:16px;height:16px;background:#f4f4f4;border:1px solid #9aa0a8;box-sizing:border-box;border-top:3px solid #7a9ac8"></div>
<svg style="left:-9px;top:35px" width="14.500" height="13" viewBox="0 0 18 16"><path d="M0 10 L5 7.500 L8 10.500 Z" fill="#4a9fd0"/><path d="M4 12 L8 10 L11 2 Q12.500 0.500 13.500 4 L16.500 13.500 L13 11 L9.500 15.500 L7 13 Z" fill="#e8622a"/><path d="M11 2 Q12.500 0.500 13.500 4 L16.500 13.500 L13 11 Z" fill="#f4a020"/></svg>
<div class="t ui" style="left:11px;top:34px;font-size:12px;letter-spacing:-0.18px">Figure 2: Line_scan,Fitting</div>
<div class="a" style="left:712px;top:26px;width:104px;height:19px;border:1px solid #2e3a48;border-top:none;border-radius:0 0 5px 5px;box-sizing:border-box;background:linear-gradient(#c3c9cf 0%,#a9b1b9 45%,#6a7682 50%,#7e8a96 100%);box-shadow:0 0 0 1px rgba(255,255,255,.55)"></div>
<div class="a" style="left:767px;top:27px;width:48px;height:17px;border-radius:0 0 4px 0;background:linear-gradient(#e9a493 0%,#dd8270 45%,#c13a22 50%,#c8492c 75%,#da7a55 100%);box-shadow:inset 0 0 0 1px rgba(255,255,255,.35)"></div>
<div class="a" style="left:740px;top:27px;width:1px;height:17px;background:#2e3a48"></div><div class="a" style="left:741px;top:27px;width:1px;height:17px;background:rgba(255,255,255,.45)"></div>
<div class="a" style="left:766px;top:27px;width:1px;height:17px;background:#2e3a48"></div>
<svg style="left:712px;top:26px" width="104" height="19">
<rect x="9.500" y="9.500" width="11" height="3.500" rx="1" fill="#fff" stroke="#3a4450" stroke-width="1"/>
<rect x="36.500" y="4.500" width="10.500" height="9" rx="1" fill="#fff" stroke="#3a4450" stroke-width="1"/><rect x="39.500" y="7.500" width="4.500" height="3" fill="#8a96a2" stroke="#3a4450" stroke-width="1"/>
<path d="M73.500 4.500 l3.600 0 l2.200 2.900 l2.200 -2.900 l3.600 0 l-4 4.800 l4 4.800 l-3.600 0 l-2.200 -2.900 l-2.200 2.900 l-3.600 0 l4 -4.800 z" fill="#fff" stroke="#4a3030" stroke-width="1" stroke-linejoin="round"/>
</svg>
<div class="menu" style="left:-10px;top:55px;width:824px;height:25px"><span style="left:8px">File</span><span style="left:43px">Edit</span><span style="left:80px">View</span><span style="left:121px">Insert</span><span style="left:167px">Tools</span><span style="left:211px">Desktop</span><span style="left:270px">Window</span><span style="left:331px">Help</span></div><svg style="left:800px;top:64px" width="8" height="6.500" viewBox="0 0 9 9" preserveAspectRatio="none"><path d="M1 1.500 Q3.500 1.200 5.500 4.800" fill="none" stroke="#000" stroke-width="1.300"/><path d="M8 2.500 L8 8 L2.500 8 Z" fill="#000"/></svg><div class="a" style="left:-10px;top:80px;width:824px;height:1px;background:#9a9a9a"></div><div class="a" style="left:-10px;top:107px;width:824px;height:1px;background:#8e8e8e"></div><div class="a" style="left:-10px;top:108px;width:824px;height:1px;background:#fcfcfc"></div><svg style="left:-5px;top:85px" width="16" height="16" viewBox="0 0 16 16"><path d="M2.500 1.500 L9.500 1.500 L13.500 5.500 L13.500 14.500 L2.500 14.500 Z" fill="#fdfdff" stroke="#62708c"/><path d="M9.500 1.500 L9.500 5.500 L13.500 5.500" fill="#dfe5f2" stroke="#62708c"/></svg><svg style="left:16px;top:85px" width="16" height="16" viewBox="0 0 16 16"><path d="M9 3 Q12 0.500 14.500 3 M14.800 1 L14.800 3.400 L12.400 3.400" fill="none" stroke="#5a78b0" stroke-width="1"/><path d="M1 5 L1 14 L12 14 L12 6.500 L6.500 6.500 L5.500 5 Z" fill="#e9c24a" stroke="#9a7a1c"/><path d="M1.500 14 L4 8.500 L15 8.500 L12 14 Z" fill="#f7e088" stroke="#9a7a1c"/></svg><svg style="left:39px;top:85px" width="16" height="16" viewBox="0 0 16 16"><path d="M1.500 1.500 L14.500 1.500 L14.500 14.500 L3 14.500 L1.500 13 Z" fill="#4a48c4" stroke="#2a2878"/><rect x="4" y="2" width="8" height="5.500" fill="#f2f2fa"/><rect x="5" y="10" width="7" height="4.500" fill="#2a2a60"/><rect x="6" y="11" width="2" height="3" fill="#e8e8f0"/></svg><svg style="left:62px;top:85px" width="16" height="16" viewBox="0 0 16 16"><path d="M5 1 L11.500 1 L12.500 7 L4 7 Z" fill="#cfe2fb" stroke="#8ea4c4" stroke-width=".8"/><path d="M1 7.500 Q1 6.500 3 6.500 L13 6.500 Q15 6.500 15 7.500 L15 11.500 L12.500 14.500 L3.500 14.500 L1 11.500 Z" fill="#d8d8d8" stroke="#7a7a7a"/><path d="M3 10 L13 10 M3.500 12 L12.500 12" stroke="#8a8a8a" stroke-width="1"/><rect x="11.500" y="8" width="1.500" height="1" fill="#3a9a3a"/></svg><div class="a" style="left:85px;top:84px;width:1px;height:20px;background:#9d9d9d"></div><svg style="left:94px;top:85px" width="16" height="16" viewBox="0 0 16 16"><path d="M4.500 1.500 L4.500 13 L7.300 10.300 L9.300 14.800 L11 14 L9 9.700 L12.800 9.700 Z" fill="#fff" stroke="#000" stroke-width="1.100" stroke-linejoin="miter"/></svg><div class="a" style="left:116px;top:84px;width:1px;height:20px;background:#9d9d9d"></div><svg style="left:124px;top:85px" width="16" height="16" viewBox="0 0 16 16"><path d="M8.800 8.800 L14 14" stroke="#d89430" stroke-width="2.600" stroke-linecap="round"/><path d="M8.800 8.800 L14 14" stroke="#f2c46a" stroke-width="1" stroke-linecap="round"/><circle cx="5.800" cy="5.800" r="4.600" fill="#e6f1ff" stroke="#5a84c8" stroke-width="1.300"/><path d="M3.300 5.800 L8.300 5.800 M5.800 3.300 L5.800 8.300" stroke="#2c56b0" stroke-width="1.500"/></svg><svg style="left:147px;top:85px" width="16" height="16" viewBox="0 0 16 16"><path d="M8.800 8.800 L14 14" stroke="#d89430" stroke-width="2.600" stroke-linecap="round"/><path d="M8.800 8.800 L14 14" stroke="#f2c46a" stroke-width="1" stroke-linecap="round"/><circle cx="5.800" cy="5.800" r="4.600" fill="#e6f1ff" stroke="#5a84c8" stroke-width="1.300"/><path d="M3.300 5.800 L8.300 5.800" stroke="#2c56b0" stroke-width="1.500"/></svg><svg style="left:169px;top:85px" width="16" height="16" viewBox="0 0 16 16"><g transform="translate(-1.300,-1.800) scale(1.180,1.120)"><path d="M4.500 15 L4 11.500 L1.500 8 Q1.200 6.500 2.800 7 L4.500 9 L4.200 3.500 Q4.800 2 5.800 3.300 L6.300 7 L6.600 2 Q7.500 0.700 8.300 2 L8.500 7 L9.300 2.700 Q10.300 1.500 10.900 3 L10.700 7.500 L11.900 4.500 Q13 3.700 13.300 5 L12.500 11 L11.500 15 Z" fill="#fbe3cf" stroke="#3c5cb0" stroke-width="1" stroke-linejoin="round"/></g></svg><svg style="left:193px;top:85px" width="16" height="16" viewBox="0 0 16 16"><path d="M3 4 A6.600 6.600 0 1 1 1.800 10.800" fill="none" stroke="#24387c" stroke-width="2.100"/><path d="M0.500 2.500 L5.800 2.200 L4.300 7 Z" fill="#24387c"/><path d="M5.500 6.500 L8.500 5.500 L11.500 6.500 L11.500 10.500 L8.500 12 L5.500 10.500 Z M5.500 6.500 L8.500 7.800 L11.500 6.500 M8.500 7.800 L8.500 12" fill="#eef2fb" stroke="#4a64a8" stroke-width=".9"/></svg><svg style="left:216px;top:85px" width="16" height="16" viewBox="0 0 16 16"><path d="M0.500 2 Q3 11.500 13 14" fill="none" stroke="#2030e0" stroke-width="1.100" stroke-dasharray="3 1.500"/><rect x="6.500" y="0.500" width="9" height="8" fill="#f6eda0" stroke="#8a8a4a" stroke-width=".9"/><path d="M8 3 L14 3 M8 5 L14 5" stroke="#8a8a5a" stroke-width=".8"/><path d="M1 10 L9 10 M5 6 L5 14" stroke="#000" stroke-width="1.800"/></svg><svg style="left:240px;top:85px" width="16" height="16" viewBox="0 0 16 16"><path d="M14.500 0.800 L15.500 1.800 L8.500 10 L6.800 8.500 Z" fill="#8aa0d8" stroke="#3a4a88" stroke-width=".8"/><path d="M6.800 8.500 L8.500 10 Q7 13.500 1.500 14.500 Q4.500 12 4.500 10 Q5.500 8.200 6.800 8.500Z" fill="#555" stroke="#333" stroke-width=".6"/><rect x="9" y="10" width="5" height="5" fill="#f01818"/></svg><svg style="left:263px;top:92px" width="7" height="4"><path d="M0 0 L6 0 L3 3.500Z" fill="#222"/></svg><div class="a" style="left:274px;top:84px;width:1px;height:20px;background:#9d9d9d"></div><svg style="left:282px;top:85px" width="16" height="16" viewBox="0 0 16 16"><rect x="3.500" y="0.500" width="11" height="9" fill="#eaf0fa" stroke="#4a5c8c"/><rect x="3.500" y="0.500" width="11" height="2.500" fill="#5a74b4" stroke="#4a5c8c"/><rect x="0.500" y="3.500" width="11" height="9" fill="#f4f7fc" stroke="#4a5c8c"/><rect x="0.500" y="3.500" width="11" height="2.500" fill="#5a74b4" stroke="#4a5c8c"/><rect x="3" y="10.500" width="5.500" height="4" rx="2" fill="none" stroke="#4a5878" stroke-width="1.300"/><rect x="7.500" y="10.500" width="5.500" height="4" rx="2" fill="none" stroke="#4a5878" stroke-width="1.300"/></svg><div class="a" style="left:305px;top:84px;width:1px;height:20px;background:#9d9d9d"></div><svg style="left:313px;top:85px" width="16" height="16" viewBox="0 0 16 16"><defs><linearGradient id="cbg1990" x1="0" y1="0" x2="0" y2="1"><stop offset="0" stop-color="#8486ea"/><stop offset=".4" stop-color="#8cd4ea"/><stop offset=".7" stop-color="#f2eea4"/><stop offset="1" stop-color="#f2aa9c"/></linearGradient></defs><rect x="3.500" y="0.500" width="9" height="15" fill="url(#cbg1990)" stroke="#2a3a78"/></svg><svg style="left:336px;top:85px" width="16" height="16" viewBox="0 0 16 16"><rect x="0.500" y="0.500" width="15" height="15" fill="#e9eef8" stroke="#2a3a78"/><rect x="2.500" y="3" width="5" height="4" fill="#e05c6c"/><rect x="2.500" y="9.500" width="5" height="4" fill="#6c6ce0"/><path d="M9.500 5 L13.500 5 M9.500 11.500 L13.500 11.500" stroke="#111" stroke-width="1.300"/></svg><div class="a" style="left:359px;top:84px;width:1px;height:20px;background:#9d9d9d"></div><svg style="left:367px;top:85px" width="16" height="16" viewBox="0 0 16 16"><rect x="2.500" y="3.500" width="10" height="9.500" rx="1" fill="#8c8c8c" stroke="#a8a8a8"/></svg><svg style="left:389px;top:85px" width="16" height="16" viewBox="0 0 16 16"><rect x="0.700" y="1.200" width="14.600" height="13.600" fill="#2c3c8c" stroke="#1c2c6c" stroke-width="1"/><rect x="3" y="3.500" width="10" height="8" fill="#fff"/><path d="M1.500 13.200 l1 -1 l1 1 l1 -1 l1 1 l1 -1 l1 1 l1 -1 l1 1 l1 -1 l1 1 l1 -1 l1 1 l1 -1" stroke="#c8d0f0" stroke-width=".7" fill="none"/></svg><svg style="left:0;top:109px" width="814" height="433" viewBox="0 109 814 433" font-family="Liberation Sans, sans-serif"><rect x="97.5" y="185.5" width="638.1" height="95.8" fill="#fff" stroke="#262626" stroke-width="1"/><path d="M97.50 281.3 l0 -5.500 M97.50 185.5 l0 5.500 M203.85 281.3 l0 -5.500 M203.85 185.5 l0 5.500 M310.20 281.3 l0 -5.500 M310.20 185.5 l0 5.500 M416.55 281.3 l0 -5.500 M416.55 185.5 l0 5.500 M522.90 281.3 l0 -5.500 M522.90 185.5 l0 5.500 M629.25 281.3 l0 -5.500 M629.25 185.5 l0 5.500 M735.60 281.3 l0 -5.500 M735.60 185.5 l0 5.500 M97.5 185.50 l5.500 0 M735.6 185.50 l-5.500 0 M97.5 217.43 l5.500 0 M735.6 217.43 l-5.500 0 M97.5 249.37 l5.500 0 M735.6 249.37 l-5.500 0 M97.5 281.30 l5.500 0 M735.6 281.30 l-5.500 0" stroke="#262626" stroke-width="1" fill="none"/><polyline points="97.5,206.0 98.8,204.4 100.0,202.8 101.3,201.2 102.6,200.5 103.8,201.2 105.1,201.9 106.4,202.6 107.6,205.8 108.9,205.3 110.2,203.6 111.4,203.9 112.7,204.5 114.0,206.4 115.2,206.4 116.5,205.1 117.8,205.9 119.0,206.3 120.3,207.0 121.6,208.1 122.8,207.7 124.1,206.9 125.4,207.1 126.6,206.6 127.9,207.6 129.2,208.5 130.4,208.1 131.7,207.9 132.9,207.2 134.2,208.0 135.5,208.5 136.7,209.7 138.0,209.7 139.3,209.5 140.5,208.9 141.8,209.1 143.1,211.3 144.3,212.4 145.6,212.3 146.9,211.5 148.1,210.3 149.4,210.4 150.7,211.3 151.9,211.8 153.2,212.7 154.5,211.4 155.7,211.5 157.0,211.2 158.3,213.1 159.5,214.0 160.8,213.0 162.1,212.9 163.3,213.6 164.6,213.5 165.9,215.4 167.1,215.5 168.4,215.1 169.7,215.2 170.9,214.8 172.2,214.3 173.5,214.9 174.7,216.0 176.0,216.9 177.3,215.9 178.5,214.5 179.8,215.1 181.1,216.1 182.3,217.1 183.6,218.5 184.9,217.1 186.1,217.4 187.4,217.8 188.7,218.5 189.9,220.2 191.2,219.3 192.5,219.3 193.7,217.9 195.0,218.6 196.3,219.2 197.5,220.1 198.8,221.1 200.1,220.2 201.3,219.1 202.6,220.5 203.9,220.8 205.1,222.1 206.4,223.0 207.6,222.2 208.9,221.1 210.2,223.0 211.4,222.8 212.7,223.7 214.0,224.4 215.2,222.9 216.5,222.3 217.8,222.2 219.0,223.2 220.3,224.8 221.6,224.2 222.8,224.2 224.1,223.6 225.4,224.4 226.6,226.5 227.9,226.8 229.2,227.0 230.4,227.0 231.7,225.5 233.0,226.0 234.2,228.2 235.5,228.8 236.8,227.6 238.0,226.7 239.3,227.1 240.6,227.8 241.8,227.6 243.1,229.7 244.4,229.6 245.6,228.6 246.9,228.1 248.2,228.3 249.4,229.5 250.7,232.0 252.0,230.8 253.2,231.0 254.5,229.9 255.8,231.3 257.0,231.9 258.3,232.0 259.6,231.5 260.8,231.6 262.1,230.0 263.4,230.8 264.6,232.4 265.9,233.8 267.2,233.4 268.4,232.3 269.7,233.3 271.0,232.8 272.2,233.7 273.5,235.1 274.8,235.3 276.0,233.9 277.3,233.7 278.5,234.5 279.8,235.8 281.1,235.6 282.3,235.7 283.6,235.8 284.9,235.5 286.1,235.6 287.4,236.8 288.7,237.5 289.9,236.7 291.2,236.0 292.5,235.8 293.7,238.2 295.0,239.0 296.3,240.2 297.5,238.4 298.8,238.7 300.1,238.0 301.3,238.8 302.6,239.0 303.9,240.8 305.1,238.8 306.4,238.9 307.7,238.9 308.9,239.9 310.2,240.8 311.5,241.6 312.7,241.7 314.0,241.4 315.3,240.3 316.5,241.6 317.8,243.1 319.1,243.7 320.3,242.6 321.6,242.4 322.9,242.1 324.1,242.0 325.4,243.0 326.7,243.1 327.9,243.1 329.2,242.5 330.5,241.3 331.7,243.1 333.0,245.0 334.3,245.6 335.5,245.2 336.8,244.0 338.1,244.5 339.3,244.9 340.6,245.7 341.9,246.9 343.1,245.1 344.4,245.4 345.6,243.7 346.9,245.2 348.2,245.9 349.4,246.0 350.7,246.6 352.0,245.5 353.2,245.6 354.5,247.0 355.8,247.0 357.0,247.3 358.3,247.7 359.6,247.7 360.8,246.6 362.1,247.2 363.4,249.6 364.6,249.5 365.9,248.6 367.2,248.5 368.4,247.0 369.7,248.2 371.0,248.3 372.2,249.3 373.5,249.7 374.8,249.3 376.0,249.2 377.3,249.1 378.6,250.7 379.8,250.8 381.1,250.2 382.4,250.2 383.6,250.6 384.9,251.2 386.2,251.8 387.4,252.6 388.7,250.7 390.0,249.5 391.2,249.8 392.5,250.0 393.8,250.9 395.0,251.9 396.3,252.0 397.6,251.1 398.8,250.8 400.1,252.7 401.4,254.1 402.6,253.6 403.9,252.5 405.2,251.6 406.4,253.0 407.7,251.8 409.0,254.0 410.2,254.0 411.5,252.9 412.8,252.9 414.0,251.1 415.3,252.1 416.6,253.8 417.8,253.4 419.1,254.8 420.3,253.0 421.6,252.8 422.9,253.4 424.1,255.7 425.4,255.8 426.7,255.6 427.9,254.8 429.2,254.8 430.5,255.7 431.7,255.9 433.0,255.1 434.3,255.0 435.5,253.6 436.8,253.1 438.1,254.8 439.3,256.4 440.6,255.8 441.9,255.7 443.1,255.2 444.4,256.0 445.7,256.4 446.9,257.6 448.2,258.2 449.5,256.8 450.7,256.7 452.0,256.6 453.3,255.4 454.5,258.0 455.8,257.8 457.1,255.9 458.3,255.8 459.6,256.1 460.9,257.6 462.1,257.6 463.4,258.4 464.7,258.7 465.9,257.9 467.2,258.2 468.5,257.9 469.7,259.2 471.0,258.4 472.3,258.8 473.5,258.1 474.8,257.4 476.1,258.2 477.3,257.9 478.6,259.6 479.9,259.1 481.1,258.4 482.4,257.5 483.7,259.0 484.9,259.0 486.2,260.8 487.4,260.2 488.7,258.4 490.0,257.7 491.2,259.2 492.5,260.3 493.8,260.8 495.0,259.4 496.3,257.4 497.6,258.9 498.8,257.9 500.1,260.4 501.4,259.2 502.6,259.0 503.9,259.4 505.2,258.0 506.4,259.0 507.7,260.9 509.0,261.7 510.2,261.4 511.5,260.3 512.8,260.8 514.0,260.4 515.3,262.2 516.6,260.2 517.8,259.7 519.1,259.5 520.4,258.8 521.6,260.5 522.9,261.2 524.2,261.2 525.4,261.4 526.7,260.1 528.0,259.7 529.2,260.8 530.5,262.9 531.8,263.3 533.0,261.0 534.3,261.7 535.6,261.9 536.8,261.5 538.1,262.3 539.4,261.4 540.6,261.3 541.9,260.4 543.2,260.5 544.4,260.0 545.7,263.2 547.0,262.3 548.2,261.5 549.5,261.9 550.8,261.5 552.0,262.3 553.3,263.8 554.6,262.4 555.8,262.8 557.1,261.6 558.3,262.8 559.6,263.4 560.9,262.5 562.1,262.9 563.4,261.2 564.7,261.2 565.9,262.2 567.2,263.3 568.5,263.3 569.7,263.1 571.0,262.3 572.3,262.8 573.5,263.7 574.8,262.7 576.1,265.2 577.3,263.3 578.6,262.9 579.9,262.1 581.1,263.2 582.4,263.0 583.7,263.7 584.9,264.3 586.2,262.3 587.5,263.1 588.7,261.8 590.0,263.8 591.3,264.1 592.5,264.2 593.8,264.5 595.1,263.7 596.3,263.8 597.6,264.8 598.9,265.8 600.1,264.8 601.4,264.1 602.7,264.3 603.9,264.3 605.2,264.7 606.5,266.3 607.7,265.6 609.0,265.5 610.3,263.4 611.5,265.0 612.8,266.2 614.1,267.5 615.3,266.2 616.6,265.6 617.9,266.6 619.1,265.0 620.4,267.8 621.7,268.3 622.9,266.2 624.2,265.6 625.5,266.0 626.7,264.9 628.0,265.3 629.2,268.0" fill="none" stroke="#0072bd" stroke-width="1" stroke-linejoin="round"/><rect x="97.5" y="390.5" width="638.1" height="95.8" fill="#fff" stroke="#262626" stroke-width="1"/><path d="M139.10 486.3 l0 -5.500 M139.10 390.5 l0 5.500 M224.30 486.3 l0 -5.500 M224.30 390.5 l0 5.500 M309.50 486.3 l0 -5.500 M309.50 390.5 l0 5.500 M394.70 486.3 l0 -5.500 M394.70 390.5 l0 5.500 M479.90 486.3 l0 -5.500 M479.90 390.5 l0 5.500 M565.10 486.3 l0 -5.500 M565.10 390.5 l0 5.500 M650.30 486.3 l0 -5.500 M650.30 390.5 l0 5.500 M735.50 486.3 l0 -5.500 M735.50 390.5 l0 5.500 M97.5 398.80 l5.500 0 M735.6 398.80 l-5.500 0 M97.5 429.30 l5.500 0 M735.6 429.30 l-5.500 0 M97.5 459.80 l5.500 0 M735.6 459.80 l-5.500 0" stroke="#262626" stroke-width="1" fill="none"/><clipPath id="ax2c"><rect x="97.5" y="390.5" width="638.1" height="95.8"/></clipPath><polyline clip-path="url(#ax2c)" points="214.1,388.9 219.2,390.9 224.3,392.9 229.4,394.9 234.5,396.8 239.6,398.7 244.7,400.5 249.9,402.3 255.0,404.1 260.1,405.9 265.2,407.6 270.3,409.3 275.4,410.9 280.5,412.6 285.6,414.1 290.8,415.7 295.9,417.2 301.0,418.7 306.1,420.2 311.2,421.6 316.3,423.0 321.4,424.3 326.5,425.7 331.7,426.9 336.8,428.2 341.9,429.4 347.0,430.6 352.1,431.8 357.2,432.9 362.3,434.0 367.4,435.0 372.5,436.1 377.7,437.1 382.8,438.0 387.9,439.0 393.0,439.9 398.1,440.7 403.2,441.5 408.3,442.3 413.4,443.1 418.6,443.8 423.7,444.5 428.8,445.2 433.9,445.8 439.0,446.4 444.1,447.0 449.2,447.5 454.3,448.0 459.5,448.5 464.6,448.9 469.7,449.3 474.8,449.7 479.9,450.0 485.0,450.3 490.1,450.6 495.2,450.8 500.3,451.0 505.5,451.2 510.6,451.3 515.7,451.4 520.8,451.5 525.9,451.6 531.0,451.6 536.1,451.5 541.2,451.5 546.4,451.4 551.5,451.3 556.6,451.1 561.7,450.9 566.8,450.7 571.9,450.4 577.0,450.1 582.1,449.8 587.3,449.4 592.4,449.1 597.5,448.6 602.6,448.2 607.7,447.7 612.8,447.2 617.9,446.6 623.0,446.0 628.1,445.4 633.3,444.8 638.4,444.1 643.5,443.4 648.6,442.6 653.7,441.8 658.8,441.0 663.9,440.1 669.0,439.3 674.2,438.3 679.3,437.4 684.4,436.4 689.5,435.4 694.6,434.3 699.7,433.3 704.8,432.2 709.9,431.0 715.1,429.8 720.2,428.6 725.3,427.4 730.4,426.1 735.5,424.8" fill="none" stroke="#0072bd" stroke-width="1.100"/><polygon points="306.5,417.3 307.7,418.0 309.0,417.6 310.2,418.6 311.4,418.0 312.6,419.4 313.9,418.8 315.1,419.3 316.3,420.5 317.5,420.8 318.8,420.5 320.0,421.3 321.2,421.6 322.4,420.8 323.6,422.3 324.9,421.5 326.1,422.0 327.3,422.8 328.5,423.1 329.8,424.0 331.0,423.2 332.2,424.0 333.4,424.4 334.7,425.0 335.9,425.5 337.1,424.7 338.3,424.9 339.6,425.8 340.8,426.0 342.0,425.9 343.2,426.0 344.4,426.5 345.7,427.3 346.9,426.9 348.1,427.3 349.3,428.1 350.6,428.9 351.8,428.6 353.0,429.0 354.2,428.9 355.5,428.7 356.7,429.8 357.9,429.8 359.1,430.3 360.4,430.2 361.6,430.3 362.8,431.6 364.0,430.8 365.2,431.5 366.5,432.1 367.7,432.5 368.9,431.6 370.1,432.4 371.4,432.5 372.6,432.7 373.8,433.7 375.0,433.0 376.3,433.0 377.5,433.8 378.7,434.0 379.9,434.9 381.2,434.6 382.4,434.6 383.6,435.2 384.8,435.1 386.0,435.1 387.3,436.3 388.5,436.5 389.7,435.7 390.9,435.7 392.2,437.1 393.4,436.0 394.6,436.3 395.8,437.1 397.1,437.6 398.3,436.9 399.5,437.7 400.7,437.4 402.0,438.6 403.2,438.3 404.4,439.1 405.6,439.2 406.9,438.6 408.1,439.3 409.3,439.3 410.5,439.3 411.7,438.9 413.0,440.1 414.2,439.4 415.4,439.9 416.6,440.6 417.9,440.3 419.1,440.4 420.3,441.2 421.5,440.3 422.8,440.6 424.0,441.9 425.2,441.5 426.4,442.1 427.7,442.3 428.9,441.6 430.1,441.9 431.3,442.2 432.5,442.6 433.8,442.0 435.0,443.2 436.2,442.6 437.4,443.3 438.7,443.4 439.9,443.4 441.1,442.6 442.3,443.4 443.6,443.0 444.8,443.9 446.0,443.3 447.2,444.5 448.5,444.1 449.7,444.5 450.9,444.9 452.1,444.2 453.3,444.8 454.6,444.4 455.8,445.3 457.0,444.6 458.2,445.5 459.5,445.0 460.7,444.6 461.9,445.4 463.1,445.7 464.4,445.7 465.6,445.1 466.8,445.9 468.0,446.0 469.3,446.0 470.5,445.9 471.7,446.0 472.9,446.1 474.1,445.9 475.4,446.6 476.6,446.4 477.8,446.4 479.0,446.3 480.3,447.2 481.5,446.3 482.7,447.4 483.9,446.3 485.2,446.7 486.4,446.6 487.6,447.4 488.8,446.7 490.1,446.8 491.3,447.4 492.5,447.0 493.7,447.3 494.9,447.1 496.2,447.5 497.4,447.2 498.6,447.1 499.8,447.0 501.1,447.4 502.3,447.3 503.5,447.8 504.7,448.2 506.0,447.1 507.2,448.3 508.4,447.9 509.6,447.2 510.9,448.1 512.1,447.7 513.3,448.4 514.5,448.0 515.7,447.4 517.0,448.5 518.2,448.4 519.4,447.7 520.6,448.4 521.9,448.3 523.1,447.7 524.3,448.0 525.5,448.1 526.8,447.5 526.8,458.2 525.5,456.8 524.3,457.6 523.1,457.3 521.9,456.4 520.6,456.4 519.4,457.5 518.2,456.4 517.0,456.2 515.7,457.1 514.5,457.1 513.3,456.1 512.1,457.6 510.9,456.3 509.6,457.1 508.4,456.6 507.2,456.2 506.0,457.5 504.7,456.7 503.5,456.7 502.3,457.5 501.1,457.0 499.8,457.9 498.6,457.6 497.4,457.4 496.2,456.9 494.9,457.4 493.7,456.9 492.5,456.8 491.3,456.8 490.1,456.7 488.8,456.8 487.6,455.6 486.4,456.8 485.2,456.0 483.9,456.2 482.7,455.8 481.5,455.9 480.3,455.4 479.0,456.5 477.8,456.5 476.6,455.8 475.4,454.8 474.1,456.4 472.9,455.2 471.7,455.9 470.5,455.8 469.3,454.8 468.0,454.9 466.8,454.8 465.6,455.3 464.4,455.3 463.1,454.4 461.9,455.0 460.7,455.8 459.5,455.2 458.2,454.2 457.0,454.5 455.8,453.6 454.6,454.2 453.3,454.0 452.1,453.7 450.9,452.9 449.7,453.8 448.5,453.8 447.2,453.0 446.0,453.4 444.8,452.6 443.6,453.6 442.3,453.4 441.1,453.3 439.9,452.7 438.7,452.6 437.4,452.0 436.2,452.8 435.0,452.1 433.8,452.0 432.5,452.0 431.3,451.4 430.1,451.7 428.9,451.8 427.7,450.3 426.4,450.7 425.2,451.1 424.0,450.0 422.8,450.7 421.5,451.8 420.3,449.7 419.1,450.8 417.9,450.3 416.6,449.9 415.4,449.8 414.2,450.5 413.0,448.6 411.7,450.2 410.5,449.8 409.3,449.2 408.1,448.5 406.9,448.8 405.6,447.8 404.4,447.6 403.2,447.6 402.0,447.5 400.7,448.2 399.5,448.0 398.3,448.2 397.1,446.8 395.8,447.4 394.6,447.2 393.4,446.6 392.2,446.2 390.9,446.9 389.7,446.1 388.5,444.6 387.3,444.5 386.0,445.3 384.8,444.9 383.6,444.7 382.4,444.6 381.2,444.3 379.9,444.1 378.7,444.1 377.5,443.3 376.3,443.7 375.0,443.1 373.8,442.6 372.6,443.4 371.4,443.3 370.1,442.9 368.9,442.7 367.7,441.0 366.5,441.0 365.2,440.7 364.0,441.2 362.8,440.4 361.6,441.6 360.4,440.8 359.1,440.6 357.9,440.0 356.7,439.6 355.5,440.2 354.2,439.0 353.0,438.8 351.8,438.0 350.6,437.5 349.3,438.2 348.1,438.5 346.9,438.3 345.7,437.6 344.4,437.7 343.2,437.6 342.0,436.5 340.8,436.7 339.6,435.8 338.3,436.2 337.1,435.9 335.9,434.8 334.7,434.2 333.4,433.9 332.2,434.3 331.0,433.9 329.8,433.1 328.5,433.2 327.3,432.9 326.1,432.8 324.9,432.9 323.6,430.9 322.4,432.9 321.2,431.4 320.0,430.2 318.8,430.9 317.5,429.9 316.3,429.0 315.1,429.7 313.9,429.8 312.6,428.6 311.4,430.0 310.2,428.3 309.0,427.8 307.7,427.2 306.5,427.7" fill="#ff0000" stroke="#ff0000" stroke-width="1" stroke-linejoin="miter"/><path d="M303.5 417.3 l6 6 M309.5 417.3 l-6 6" stroke="#ff0000" stroke-width="1.200"/><path d="M523.8 448.6 l6 6 M529.8 448.6 l-6 6" stroke="#ff0000" stroke-width="1.200"/><text x="416.5" y="178.0" font-size="15.00" text-anchor="middle" font-weight="bold" fill="#000">Line scan</text><text x="97.5" y="300.0" font-size="13.00" text-anchor="middle" font-weight="normal" fill="#262626">0</text><text x="203.9" y="300.0" font-size="13.00" text-anchor="middle" font-weight="normal" fill="#262626">0.5</text><text x="310.2" y="300.0" font-size="13.00" text-anchor="middle" font-weight="normal" fill="#262626">1</text><text x="416.6" y="300.0" font-size="13.00" text-anchor="middle" font-weight="normal" fill="#262626">1.5</text><text x="522.9" y="300.0" font-size="13.00" text-anchor="middle" font-weight="normal" fill="#262626">2</text><text x="629.2" y="300.0" font-size="13.00" text-anchor="middle" font-weight="normal" fill="#262626">2.5</text><text x="735.6" y="300.0" font-size="13.00" text-anchor="middle" font-weight="normal" fill="#262626">3</text><text x="91.5" y="191.0" font-size="13.00" text-anchor="end" font-weight="normal" fill="#262626">5</text><text x="91.5" y="222.9" font-size="13.00" text-anchor="end" font-weight="normal" fill="#262626">0</text><text x="91.5" y="254.9" font-size="13.00" text-anchor="end" font-weight="normal" fill="#262626">-5</text><text x="91.5" y="286.8" font-size="13.00" text-anchor="end" font-weight="normal" fill="#262626">-10</text><text x="97.4" y="181.7" font-size="12.5" font-family="DejaVu Sans" font-weight="200" fill="#262626">×</text><text x="108.6" y="181.4" font-size="13" fill="#262626">10</text><text x="123.2" y="175.6" font-size="10.5" fill="#262626">-7</text><text x="700.2" y="323.7" font-size="12.5" font-family="DejaVu Sans" font-weight="200" fill="#262626">×</text><text x="711.4" y="323.4" font-size="13" fill="#262626">10</text><text x="726.0" y="317.6" font-size="10.5" fill="#262626">-3</text><text x="416.5" y="343.0" font-size="15.00" text-anchor="middle" font-weight="bold" fill="#000">Fitting</text><text x="416.5" y="363.0" font-size="15.00" text-anchor="middle" font-weight="bold" fill="#000">Radius of curvature = 3.2538m</text><text x="416.5" y="383.0" font-size="15.00" text-anchor="middle" font-weight="bold" fill="#000">Fitting Score = 0.078525</text><text x="139.1" y="506.0" font-size="13.00" text-anchor="middle" font-weight="normal" fill="#262626">-2</text><text x="224.3" y="506.0" font-size="13.00" text-anchor="middle" font-weight="normal" fill="#262626">-1</text><text x="309.5" y="506.0" font-size="13.00" text-anchor="middle" font-weight="normal" fill="#262626">0</text><text x="394.7" y="506.0" font-size="13.00" text-anchor="middle" font-weight="normal" fill="#262626">1</text><text x="479.9" y="506.0" font-size="13.00" text-anchor="middle" font-weight="normal" fill="#262626">2</text><text x="565.1" y="506.0" font-size="13.00" text-anchor="middle" font-weight="normal" fill="#262626">3</text><text x="650.3" y="506.0" font-size="13.00" text-anchor="middle" font-weight="normal" fill="#262626">4</text><text x="735.5" y="506.0" font-size="13.00" text-anchor="middle" font-weight="normal" fill="#262626">5</text><text x="91.5" y="404.3" font-size="13.00" text-anchor="end" font-weight="normal" fill="#262626">1</text><text x="91.5" y="434.8" font-size="13.00" text-anchor="end" font-weight="normal" fill="#262626">0</text><text x="91.5" y="465.3" font-size="13.00" text-anchor="end" font-weight="normal" fill="#262626">-1</text><text x="97.4" y="387.3" font-size="12.5" font-family="DejaVu Sans" font-weight="200" fill="#262626">×</text><text x="108.6" y="387.0" font-size="13" fill="#262626">10</text><text x="123.2" y="381.2" font-size="10.5" fill="#262626">-6</text><text x="700.2" y="529.2" font-size="12.5" font-family="DejaVu Sans" font-weight="200" fill="#262626">×</text><text x="711.4" y="528.9" font-size="13" fill="#262626">10</text><text x="726.0" y="523.1" font-size="10.5" fill="#262626">-3</text></svg><div id="slider" class="a" style="left:16px;top:603px;width:670px;height:314px;border-radius:7px;background:linear-gradient(115deg,#fdfdfd 0%,#ffffff 30%,#f3f4f6 45%,#fbfbfc 60%,#ffffff 100%);box-shadow:0 0 0 1px rgba(60,60,60,.75),0 2px 5px 1px rgba(0,0,0,.35),0 4px 12px 2px rgba(0,0,0,.25)"></div>
<div class="a" style="left:22px;top:631px;width:658px;height:281px;background:#f0f0f0;border:1px solid #7a7a7a;box-sizing:border-box"></div>
<div class="a" style="left:23px;top:609px;width:16px;height:16px;background:#f4f4f4;border:1px solid #a4a8ae;box-sizing:border-box;border-top:2px solid #7fa0cc"></div>
<svg style="left:24px;top:611px" width="14.500" height="13" viewBox="0 0 18 16"><path d="M0 10 L5 7.500 L8 10.500 Z" fill="#4a9fd0"/><path d="M4 12 L8 10 L11 2 Q12.500 0.500 13.500 4 L16.500 13.500 L13 11 L9.500 15.500 L7 13 Z" fill="#e8622a"/><path d="M11 2 Q12.500 0.500 13.500 4 L16.500 13.500 L13 11 Z" fill="#f4a020"/></svg>
<div class="t ui" style="left:44px;top:611px;font-size:12px;letter-spacing:-0.15px">Slider</div>
<div class="a" style="left:578px;top:603px;width:102px;height:19px;border:1px solid #8a90a0;border-top:none;border-radius:0 0 5px 5px;box-sizing:border-box;background:linear-gradient(rgba(255,255,255,.9),rgba(244,246,250,.9))"></div><div class="a" style="left:606px;top:603px;width:1px;height:18px;background:#9aa0ae"></div><div class="a" style="left:633px;top:603px;width:1px;height:18px;background:#9aa0ae"></div><svg style="left:578px;top:603px" width="102" height="19"><rect x="8.5" y="10.5" width="11" height="3.500" rx="1" fill="#f6f6f6" stroke="#4a5068" stroke-width="1.100"/><rect x="36.0" y="4.2" width="11" height="9" rx="1" fill="#f6f6f6" stroke="#b0b4bc" stroke-width="1.100"/><rect x="39.0" y="7.2" width="5" height="3" fill="#fff" stroke="#b0b4bc" stroke-width="1"/><path d="M74.0 4.2 l3 0 l2.500 3.200 l2.500 -3.200 l3 0 l-4 4.800 l4 4.800 l-3 0 l-2.500 -3.200 l-2.500 3.200 l-3 0 l4 -4.800 z" fill="#f4f4f4" stroke="#4a5068" stroke-width="1.100" stroke-linejoin="round"/></svg><div class="t" style="left:68.500px;top:659px;font-size:14.670px;line-height:16px">Y</div>
<div class="t" style="left:228px;top:650px;font-size:18.670px;line-height:20px">move line</div>
<div class="t" style="left:337px;top:651px;font-size:16px;line-height:18px">X: 488</div>
<div class="t" style="left:578px;top:655px;font-size:14.670px;line-height:16px">In Y verkürzen</div>
<div class="t" style="left:138px;top:761px;font-size:16px;line-height:18px">X1:</div>
<div class="t" style="left:287px;top:761px;font-size:16px;line-height:18px">X2:</div>
<div class="t" style="left:437px;top:837px;font-size:15.300px;line-height:18px">Mittelwert:</div>
<div class="btn" style="left:437px;top:682px;width:148px;height:48px;font-size:15.800px;line-height:48px">Werte speichern</div>
<div class="btn" style="left:137px;top:782px;width:99px;height:49px;font-size:10.670px;line-height:48px">Interval Grenze 1</div>
<div class="btn" style="left:287px;top:782px;width:99px;height:49px;font-size:10.670px;line-height:48px">Interval Grenze 2</div>
<div class="btn" style="left:437px;top:782px;width:122px;height:49px;font-size:10.670px;line-height:48px">Mittelwert berechnen</div>
<div class="btn" style="left:51px;top:859px;width:149px;height:49px;font-size:10.670px;line-height:48px">Auto Linescan</div>
<div class="a" style="left:49px;top:681px;width:51px;height:150px;background:#f0f0f0;box-shadow:inset -2px -2px 0 0 #7b7b7b, inset 1px 1px 0 0 #fdfdfd"></div><div class="a" style="left:49px;top:695px;width:49px;height:57px;background:#e6e6e6;border-left:1px solid #6e6e6e;border-top:2px solid #6e6e6e;box-sizing:border-box"></div><div class="a" style="left:49px;top:752px;width:50px;height:9px;background:#f0f0f0;box-shadow:inset -1px -1px 0 0 #8a8a8a, inset 1px 1px 0 0 #fff"></div><div class="a" style="left:49px;top:761px;width:49px;height:55px;background:#e6e6e6;border-left:1px solid #6e6e6e;border-top:2px solid #6e6e6e;box-sizing:border-box"></div><svg style="left:69.5px;top:686px" width="8" height="5"><path d="M0 4.500 L3.500 0.500 L7 4.500Z" fill="#555"/></svg><svg style="left:69.5px;top:821px" width="8" height="5"><path d="M0 0.500 L7 0.500 L3.500 4.500Z" fill="#555"/></svg><div class="a" style="left:603px;top:681px;width:51px;height:150px;background:#f0f0f0;box-shadow:inset -2px -2px 0 0 #7b7b7b, inset 1px 1px 0 0 #fdfdfd"></div><div class="a" style="left:603px;top:695px;width:49px;height:57px;background:#e6e6e6;border-left:1px solid #6e6e6e;border-top:2px solid #6e6e6e;box-sizing:border-box"></div><div class="a" style="left:603px;top:752px;width:50px;height:9px;background:#f0f0f0;box-shadow:inset -1px -1px 0 0 #8a8a8a, inset 1px 1px 0 0 #fff"></div><div class="a" style="left:603px;top:761px;width:49px;height:55px;background:#e6e6e6;border-left:1px solid #6e6e6e;border-top:2px solid #6e6e6e;box-sizing:border-box"></div><svg style="left:623.5px;top:686px" width="8" height="5"><path d="M0 4.500 L3.500 0.500 L7 4.500Z" fill="#555"/></svg><svg style="left:623.5px;top:821px" width="8" height="5"><path d="M0 0.500 L7 0.500 L3.500 4.500Z" fill="#555"/></svg><div class="a" style="left:122px;top:683px;width:291px;height:48px;background:#f0f0f0;box-shadow:inset -2px -2px 0 0 #7b7b7b, inset 1px 1px 0 0 #fdfdfd"></div>
<div class="a" style="left:137px;top:683px;width:148px;height:46px;background:#e6e6e6;border-left:2px solid #6e6e6e;border-top:1px solid #8a8a8a;box-sizing:border-box"></div>
<div class="a" style="left:285px;top:684px;width:21px;height:45px;background:#f0f0f0;box-shadow:inset -1px 0 0 0 #8a8a8a, inset 1px 0 0 0 #fff"></div>
<div class="a" style="left:305px;top:683px;width:92px;height:46px;background:#e6e6e6;border-left:2px solid #6e6e6e;border-top:1px solid #8a8a8a;box-sizing:border-box"></div>
<svg style="left:127px;top:702px" width="5" height="8"><path d="M4.500 0 L4.500 7 L0.500 3.500Z" fill="#555"/></svg>
<svg style="left:402px;top:702px" width="5" height="8"><path d="M0.500 0 L0.500 7 L4.500 3.500Z" fill="#555"/></svg>
</body></html>
